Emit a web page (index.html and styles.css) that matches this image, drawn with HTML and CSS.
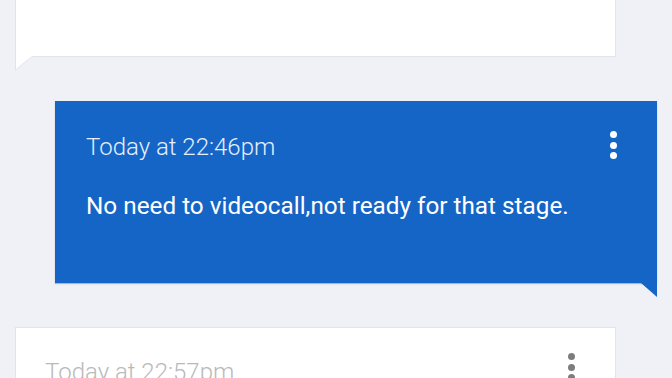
FILE: index.html
```html
<!DOCTYPE html>
<html lang="en">
<head>
    <meta charset="UTF-8">
    <meta name="viewport" content="width=device-width, initial-scale=1.0">
    <title>Messages</title>
    <link rel="stylesheet" href="styles.css">
</head>
<body>
    <div class="thread">
        <!-- previous message, scrolled mostly out of view -->
        <div class="msg msg-in msg-clipped"></div>

        <div class="msg msg-out">
            <div class="msg-head">
                <span class="msg-time">Today at 22:46pm</span>
                <button class="msg-menu" aria-label="More"><i></i><i></i><i></i></button>
            </div>
            <p class="msg-text">No need to videocall,not ready for that stage.</p>
        </div>

        <div class="msg msg-in">
            <div class="msg-head">
                <span class="msg-time">Today at 22:57pm</span>
                <button class="msg-menu" aria-label="More"><i></i><i></i><i></i></button>
            </div>
        </div>
    </div>
</body>
</html>
```

FILE: styles.css
```css
body {
    font-family: Roboto, "Noto Sans", sans-serif;
    margin: 0;
    padding: 0;
    background-color: #f0f1f7;
    overflow: hidden;
}
.thread {
    display: flex;
    flex-direction: column;
    gap: 44px;
}
.msg {
    position: relative;
    box-sizing: border-box;
    padding: 32px 31px 62px;
}
.msg-in {
    margin-left: 15px;
    width: 601px;
    background-color: #fff;
    border: 1px solid #e3e4ea;
    padding: 30px 29px 62px;
}
.msg-clipped {
    height: 57px;
    border-top: none;
    padding: 0;
}
.msg-in::before,
.msg-in::after {
    content: "";
    position: absolute;
    top: 100%;
    clip-path: polygon(0 0, 100% 0, 0 100%);
}
.msg-in::before {
    left: -1px;
    width: 18px;
    height: 15px;
    background-color: #e3e4ea;
}
.msg-in::after {
    left: 0;
    width: 16px;
    height: 13px;
    background-color: #fff;
}
.msg-out {
    margin-left: 55px;
    width: 602px;
    height: 182px;
    background-color: #1565c6;
    box-shadow: 0 1px 1px rgba(0, 0, 0, 0.25);
    color: #fff;
}
.msg-out::after {
    content: "";
    position: absolute;
    top: 100%;
    right: 0;
    width: 16px;
    height: 14px;
    background-color: #1565c6;
    clip-path: polygon(0 0, 100% 0, 100% 100%);
}
.msg-head {
    display: flex;
    justify-content: space-between;
    align-items: flex-start;
}
.msg-time {
    font-size: 24px;
    line-height: 28px;
    font-weight: 300;
}
.msg-out .msg-time {
    color: #e6eefa;
}
.msg-in .msg-time {
    color: #b9b9bb;
}
.msg-menu {
    display: flex;
    flex-direction: column;
    gap: 3.5px;
    margin: -2px 9px 0 0;
    padding: 0;
    border: none;
    background: none;
}
.msg-in .msg-menu {
    margin: -5px 11px 0 0;
}
.msg-menu i {
    width: 7px;
    height: 7px;
    border-radius: 50%;
    background-color: #fff;
}
.msg-in .msg-menu i {
    background-color: #7d7d7f;
}
.msg-text {
    margin: 31px 0 0;
    font-size: 24.3px;
    line-height: 28px;
}
```
